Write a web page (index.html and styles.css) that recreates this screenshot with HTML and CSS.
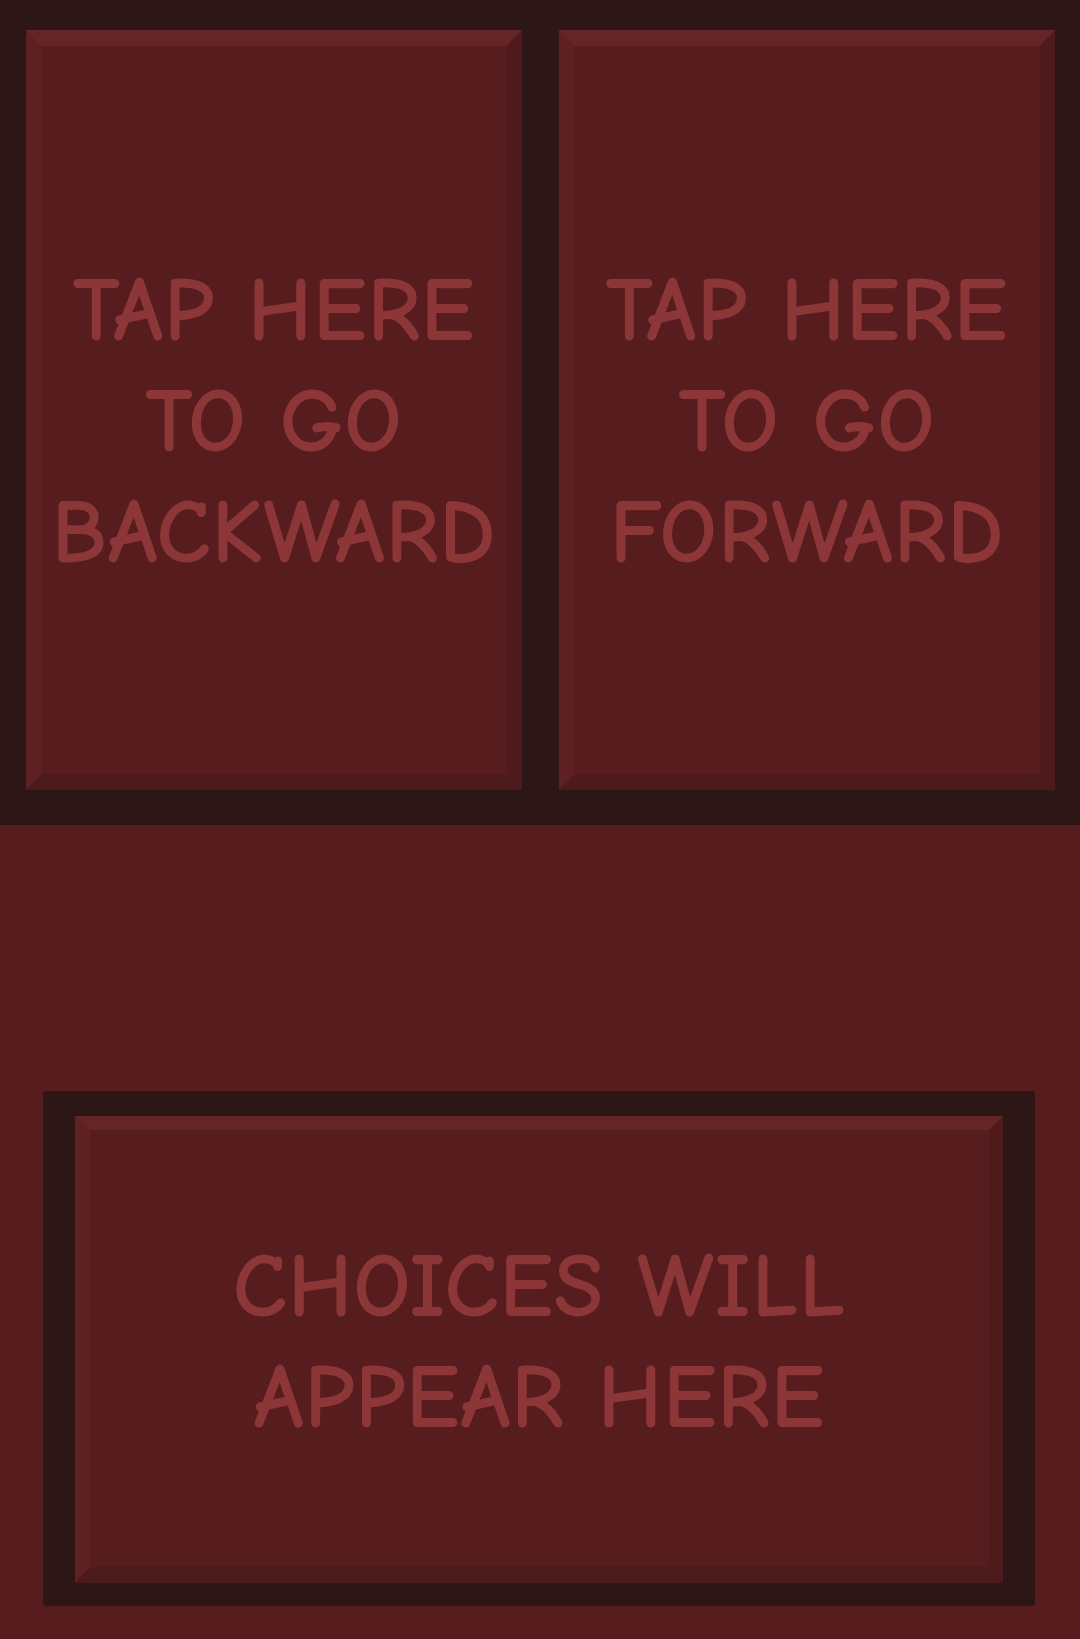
FILE: index.html
```html
<!DOCTYPE html>
<html lang="en">
<head>
<meta charset="utf-8">
<title>Story Controls</title>
<link rel="stylesheet" href="styles.css">
</head>
<body>
  <div class="screen">
    <section class="nav">
      <div class="panel">
        <p class="label label-nav">TAP HERE<br>TO GO<br>BACKWARD</p>
      </div>
      <div class="panel">
        <p class="label label-nav">TAP HERE<br>TO GO<br>FORWARD</p>
      </div>
    </section>
    <section class="choices">
      <div class="frame">
        <div class="panel panel-choices">
          <p class="label label-choices">CHOICES WILL<br>APPEAR HERE</p>
        </div>
      </div>
    </section>
  </div>
</body>
</html>
```

FILE: styles.css
```css
html, body {
  margin: 0;
  padding: 0;
}

body {
  background: #561c1e;
  font-family: "Comic Sans MS", "Comic Neue", "DejaVu Sans", sans-serif;
}

.screen {
  width: 1080px;
  height: 1639px;
  display: flex;
  flex-direction: column;
}

.nav {
  height: 825px;
  box-sizing: border-box;
  background: #2c1616;
  padding: 30px 25px 35px 26px;
  display: grid;
  grid-template-columns: 1fr 1fr;
  column-gap: 37px;
}

.panel {
  box-sizing: border-box;
  background: #561c1e;
  border-style: solid;
  border-width: 16px 15px 15px 15px;
  border-top-color: #652426;
  border-left-color: #5e2022;
  border-right-color: #4e1a1c;
  border-bottom-color: #4c1a1b;
  display: flex;
  align-items: center;
  justify-content: center;
}

.label {
  margin: 0;
  color: #8c3638;
  font-size: 90px;
  font-weight: 700;
  line-height: 111px;
  letter-spacing: 1px;
  text-align: center;
  white-space: nowrap;
}

.label-nav {
  padding-top: 24px;
}

.choices {
  flex: 1;
  box-sizing: border-box;
  padding: 266px 45px 0 43px;
}

.frame {
  height: 515px;
  box-sizing: border-box;
  background: #2c1616;
  border-radius: 3px;
  padding: 25px 32px 23px 32px;
  display: flex;
}

.panel-choices {
  flex: 1;
  border-width: 14px 14px 16px 15px;
}

.label-choices {
  padding-bottom: 12px;
}
```
